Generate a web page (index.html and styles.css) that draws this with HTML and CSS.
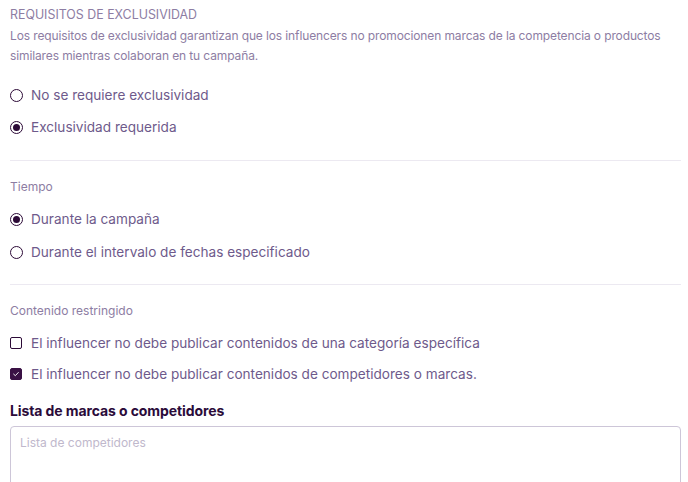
FILE: index.html
```html
<!DOCTYPE html>
<html lang="es">
<head>
<meta charset="utf-8">
<link rel="stylesheet" href="styles.css">
</head>
<body>
<div class="page">
  <section class="block">
    <h2 class="title">REQUISITOS DE EXCLUSIVIDAD</h2>
    <p class="desc">Los requisitos de exclusividad garantizan que los influencers no promocionen marcas de la competencia o productos similares mientras colaboran en tu campaña.</p>
    <div class="options first">
      <label class="opt"><span class="radio"></span>No se requiere exclusividad</label>
      <label class="opt"><span class="radio on"></span>Exclusividad requerida</label>
    </div>
  </section>
  <hr class="divider">
  <section class="block">
    <div class="sub">Tiempo</div>
    <div class="options time">
      <label class="opt"><span class="radio on"></span>Durante la campaña</label>
      <label class="opt"><span class="radio"></span>Durante el intervalo de fechas especificado</label>
    </div>
  </section>
  <hr class="divider second">
  <section class="block">
    <div class="sub">Contenido restringido</div>
    <div class="options checks">
      <label class="opt"><span class="check"></span>El influencer no debe publicar contenidos de una categoría específica</label>
      <label class="opt"><span class="check on"><svg viewBox="0 0 12 12" width="12" height="12"><path d="M3.2 6.2 L5.2 8 L8.8 4.2" fill="none" stroke="#fff" stroke-width="1.1" stroke-linecap="round" stroke-linejoin="round"/></svg></span>El influencer no debe publicar contenidos de competidores o marcas.</label>
    </div>
    <div class="field-label">Lista de marcas o competidores</div>
    <div class="textarea">Lista de competidores</div>
  </section>
</div>
</body>
</html>
```
FILE: styles.css
```css
* { box-sizing: border-box; }
html, body { margin: 0; padding: 0; background: #fff; }
body { font-family: Inter, "Noto Sans", sans-serif; color: #6f5b8c; }
.page { padding: 6px 7px 0 10px; }
.title { margin: 0; font-size: 12.4px; font-weight: 400; color: #8d7da3; line-height: 18px; }
.desc { margin: 2px 0 0; font-size: 12px; letter-spacing: -0.12px; line-height: 20px; color: #8d7da3; }
.options { display: flex; flex-direction: column; gap: 12px; margin-top: 12px; }
.options.first { margin-top: 19px; }
.options.time { gap: 13px; }
.options.checks { gap: 11px; }
.opt { display: flex; align-items: center; gap: 8px; font-size: 13.6px; line-height: 20px; color: #6e5a8b; }
.radio { width: 13px; height: 13px; border-radius: 50%; border: 1.3px solid #2c0a37; display: inline-flex; align-items: center; justify-content: center; flex: none; }
.radio.on::after { content: ""; width: 7px; height: 7px; border-radius: 50%; background: #2c0a37; }
.check { width: 12px; height: 12px; border-radius: 2px; border: 1.3px solid #2c0a37; display: inline-flex; align-items: center; justify-content: center; flex: none; margin-right: 1px; }
.check.on { background: #3a1145; border-color: #3a1145; }
.check.on svg { display: block; }
.divider { border: 0; border-top: 1px solid #ece9f1; margin: 23px 0 16px; }
.divider.second { margin-top: 22px; }
.sub { font-size: 12px; line-height: 20px; color: #8d7da3; }
.field-label { margin-top: 17px; font-size: 14px; font-weight: 700; color: #2b0b3a; line-height: 20px; letter-spacing: -0.1px; }
.textarea { margin-top: 5px; height: 70px; border: 1px solid #cdc6d8; border-radius: 4px; padding: 8px 9px; font-size: 12px; color: #c0b8cc; }
```
